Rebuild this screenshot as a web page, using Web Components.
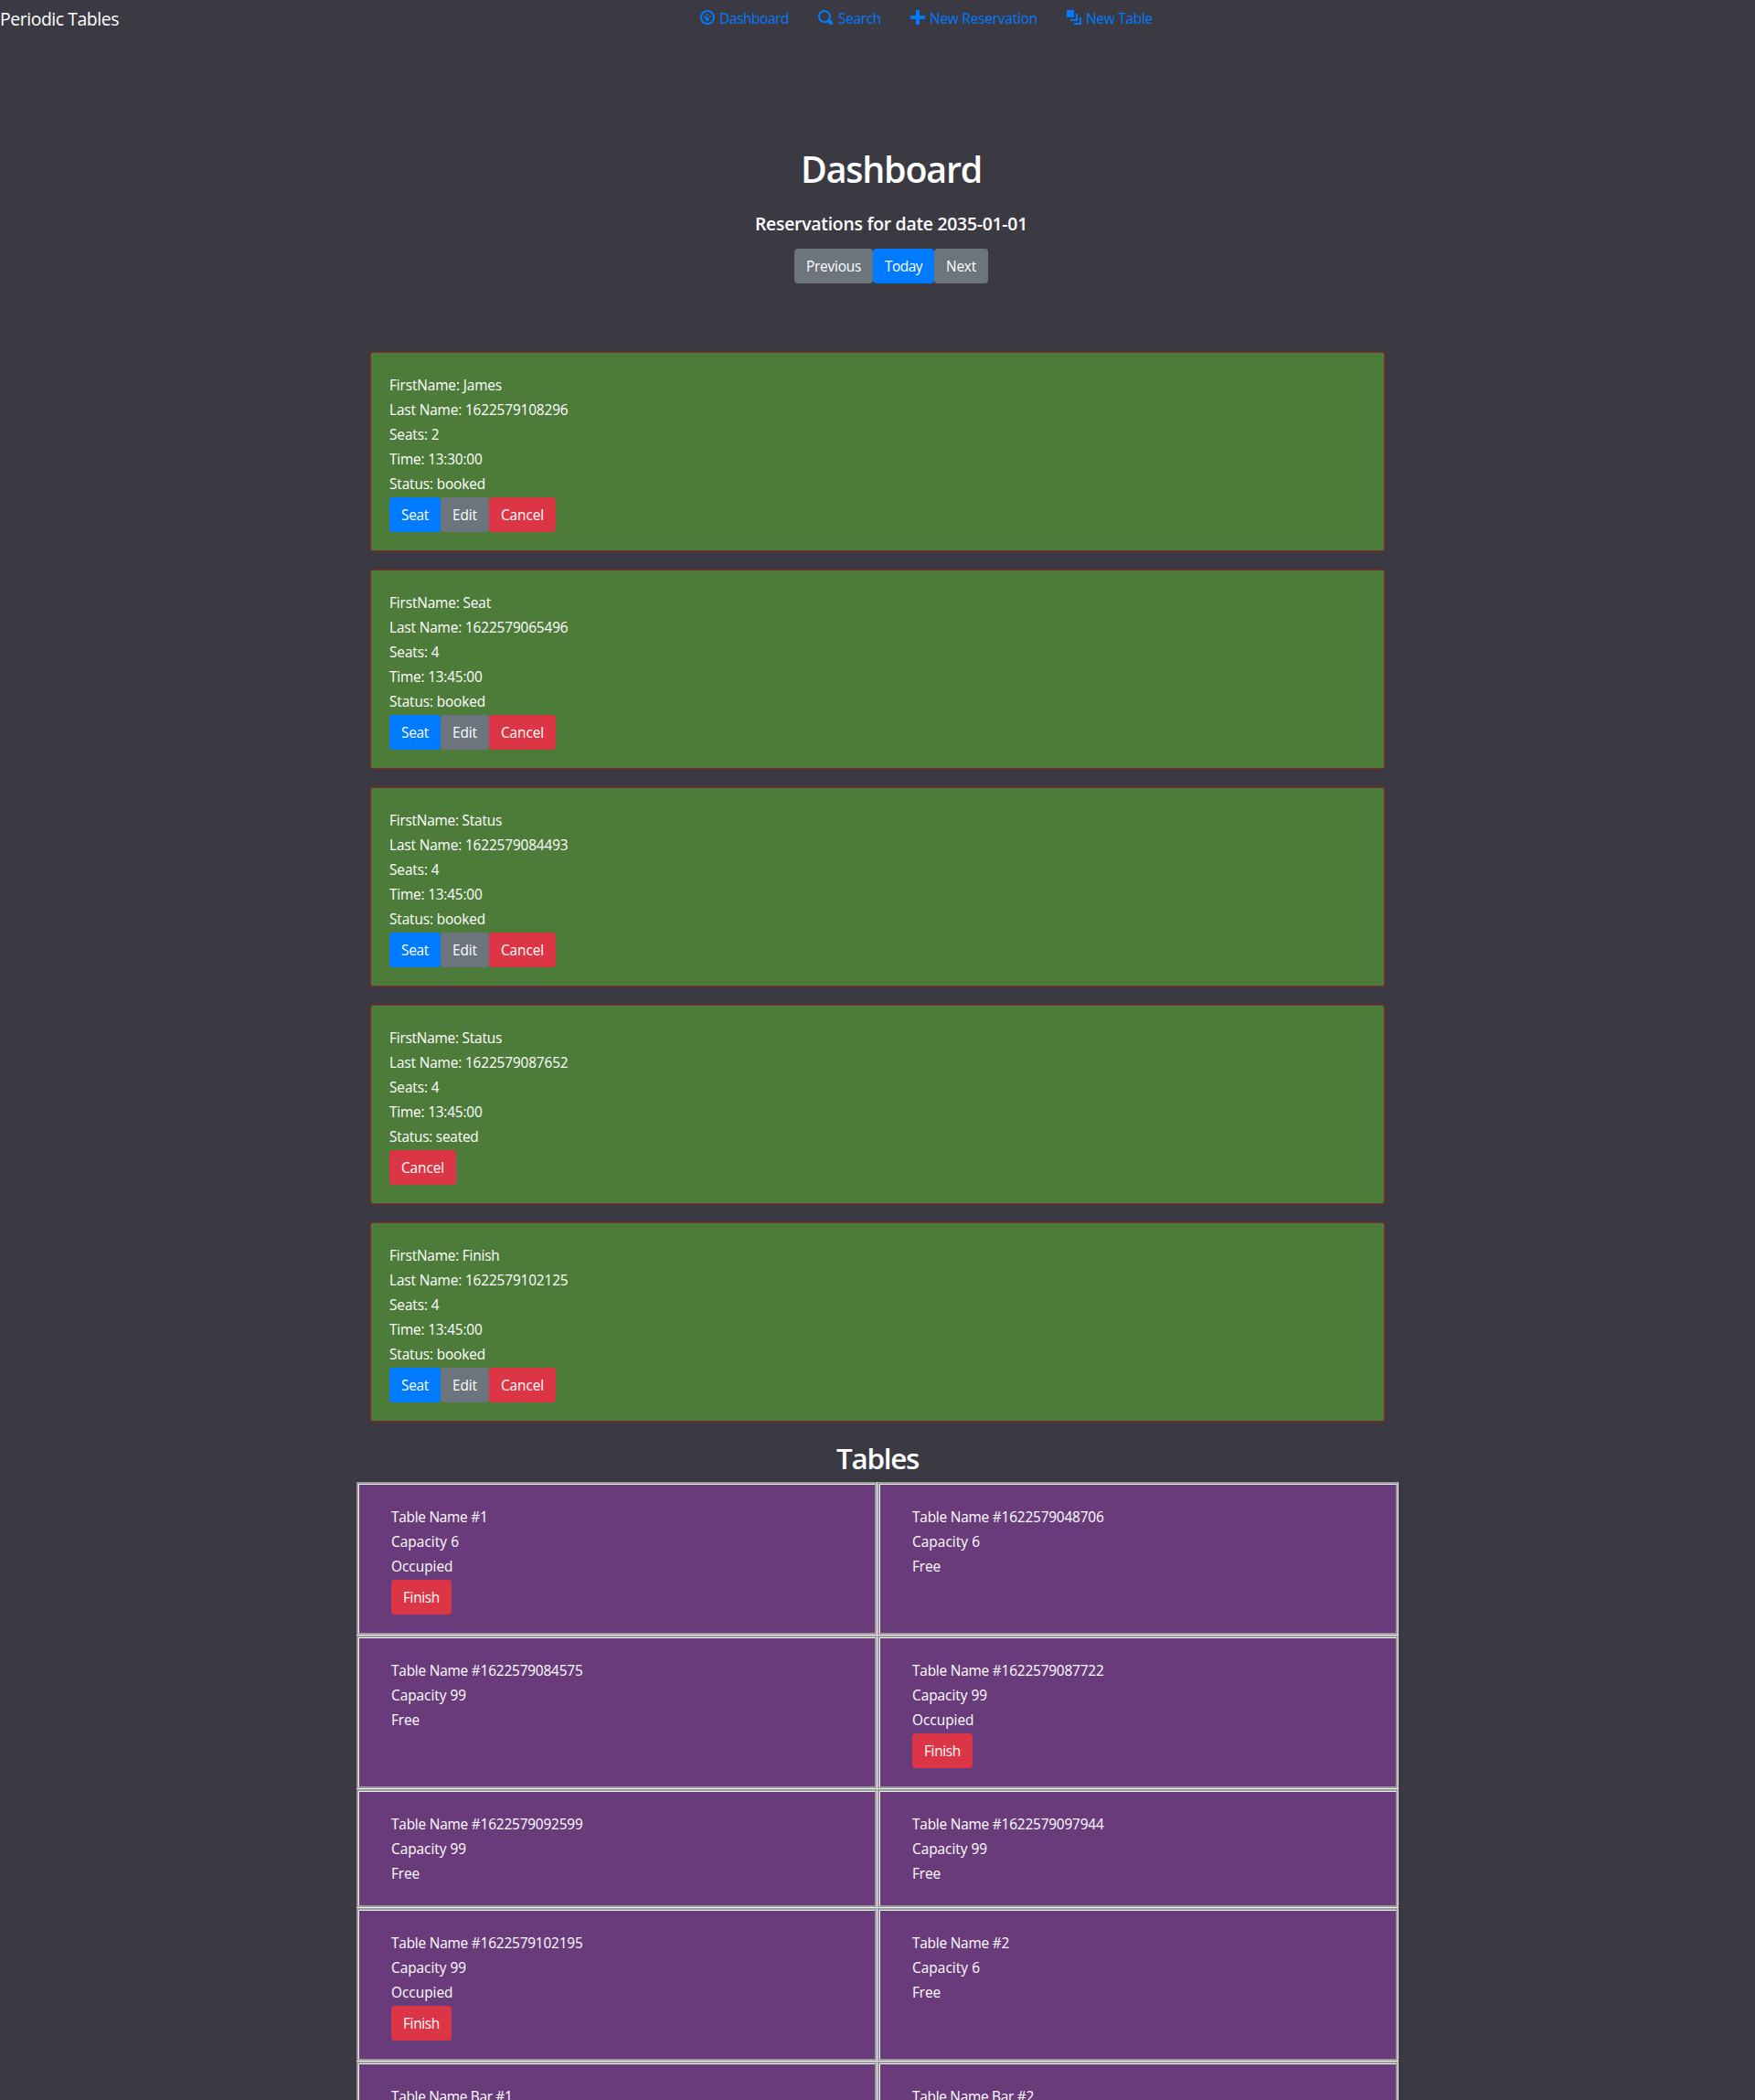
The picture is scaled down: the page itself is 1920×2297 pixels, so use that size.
<!DOCTYPE html>
<html lang="en">
<head>
<meta charset="utf-8">
<title>Periodic Tables</title>
<style>
html,body{margin:0;padding:0;height:2297px;overflow:hidden;background:#3b3a43}
body{font-family:"Open Sans","Noto Sans",sans-serif;font-size:15.4px;line-height:27px;color:#fff}
</style>
</head>
<body>
<periodic-app></periodic-app>
<script>
const define = (name, html, setup) => customElements.define(name, class extends HTMLElement {
  connectedCallback() {
    if (this.shadowRoot) return;
    const root = this.attachShadow({ mode: 'open' });
    const t = document.createElement('template');
    t.innerHTML = html;
    root.append(t.content.cloneNode(true));
    if (setup) setup(this, root);
  }
});

// A single line of text whose tracking is adjusted to the advance width in "w".
define('ui-text', `<style>:host{display:inline-block;white-space:nowrap}</style><span></span>`, (el, root) => {
  const s = root.querySelector('span'), text = el.getAttribute('text');
  s.textContent = text;
  const want = parseFloat(el.getAttribute('w'));
  const fit = (want - s.getBoundingClientRect().width) / text.length;
  s.style.letterSpacing = fit.toFixed(3) + 'px';
});

define('ui-button', `<style>
:host{display:flex;box-sizing:border-box;height:38px;line-height:24px;padding:8px 0 6px 13px;border-radius:4px;background:#6c757d;width:var(--bw)}
:host([kind=primary]){background:#007bff}
:host([kind=danger]){background:#dc3545}
</style><slot></slot>`, el => el.style.setProperty('--bw', el.getAttribute('width') + 'px'));

const button = (text, width, kind = '') =>
  `<ui-button kind="${kind}" width="${width}"><ui-text text="${text}" w="${width - 26}"></ui-text></ui-button>`;

const ICONS = {
  dashboard: 'M4 0c-2.2 0-4 1.8-4 4s1.8 4 4 4 4-1.8 4-4-1.8-4-4-4zm0 1c1.66 0 3 1.34 3 3s-1.34 3-3 3-3-1.34-3-3 1.34-3 3-3zm0 1c-.28 0-.5.22-.5.5s.22.5.5.5.5-.22.5-.5-.22-.5-.5-.5zm-1.66 1a.5.5 0 0 0-.19.84l.91.91c-.02.08-.06.16-.06.25 0 .55.45 1 1 1s1-.45 1-1-.45-1-1-1c-.09 0-.17.04-.25.06l-.91-.91a.5.5 0 0 0-.44-.16.5.5 0 0 0-.06 0zm3.16 0c-.28 0-.5.22-.5.5s.22.5.5.5.5-.22.5-.5-.22-.5-.5-.5z',
  search: 'M3.5 0c-1.93 0-3.5 1.57-3.5 3.5s1.57 3.5 3.5 3.5c.59 0 1.17-.14 1.66-.41a1 1 0 0 0 .13.13l1 1a1.02 1.02 0 1 0 1.44-1.44l-1-1a1 1 0 0 0-.16-.13c.27-.49.44-1.06.44-1.66 0-1.93-1.55-3.5-3.5-3.5zm0 1c1.39 0 2.5 1.1 2.5 2.5 0 .66-.24 1.27-.66 1.72-.01.01-.02.02-.03.03a1 1 0 0 0-.13.13c-.44.4-1.04.63-1.69.63-1.4 0-2.5-1.11-2.5-2.5s1.1-2.5 2.5-2.5z',
  plus: 'M3 0v3h-3v2h3v3h2v-3h3v-2h-3v-3h-2z',
  layers: 'M0 0v4h4v-4h-4zm5 2v3h-3v1h4v-4h-1zm2 2v3h-3v1h4v-4h-1z'
};
define('nav-link', `<style>
:host{display:flex;align-items:flex-start;color:#007bff;gap:5px}
:host([icon=search]){gap:6px}
svg{width:16px;height:16px;fill:currentColor;margin-top:11px}
ui-text{line-height:24px;margin-top:9px}
</style><svg viewBox="0 0 8 8"><path/></svg>`, (el, root) => {
  root.querySelector('path').setAttribute('d', ICONS[el.getAttribute('icon')]);
  root.innerHTML += `<ui-text text="${el.getAttribute('label')}" w="${el.getAttribute('w')}"></ui-text>`;
});

define('top-nav', `<style>
:host{display:flex;height:161px}
.brand{width:766px;font-size:19.4px;line-height:30px;padding-top:6px;box-sizing:border-box}
nav{display:flex}
nav-link{margin-right:32px}
</style><div class="brand"><ui-text text="Periodic Tables" w="130"></ui-text></div>
<nav><nav-link icon="dashboard" label="Dashboard" w="76"></nav-link>
<nav-link icon="search" label="Search" w="47"></nav-link>
<nav-link icon="plus" label="New Reservation" w="118"></nav-link>
<nav-link icon="layers" label="New Table" w="73"></nav-link></nav>`);

define('dash-head', `<style>
:host{display:flex;flex-direction:column;align-items:center;width:1950px;height:224px}
h1,h4{margin:0;font-weight:600;white-space:nowrap}
h1{font-size:39.4px;line-height:48px}
h4{font-size:19.4px;line-height:24px;margin:24px 0 15px}
.row{display:flex}
</style><h1><ui-text text="Dashboard" w="198"></ui-text></h1>
<h4><ui-text text="Reservations for date 2035-01-01" w="298"></ui-text></h4>
<div class="row">${button('Previous', 86)}${button('Today', 67, 'primary')}${button('Next', 59)}</div>`);

define('reservation-card', `<style>
:host{display:flex;flex-direction:column;box-sizing:border-box;width:1110px;height:218px;margin-bottom:20px;padding:22px 20px 20px;border:1px solid #8c2627;border-radius:3px;background:#4d7c3a}
ui-text{height:27px}
.row{display:flex;margin-top:1px}
.row ui-text{height:auto}
</style>`, (el, root) => {
  const [first, fw, last, seats, time, status, sw] = el.getAttribute('data').split('|');
  const line = (t, w) => `<ui-text text="${t}" w="${w}"></ui-text>`;
  root.innerHTML += line('FirstName: ' + first, fw) + line('Last Name: ' + last, 195.5) + line('Seats: ' + seats, 54.5) +
    line('Time: ' + time, 101.5) + line('Status: ' + status, sw) + '<div class="row">' +
    (status === 'booked' ? button('Seat', 56, 'primary') + button('Edit', 53) : '') + button('Cancel', 73, 'danger') + '</div>';
});

define('table-card', `<style>
:host{display:flex;flex-direction:column;align-items:flex-start;box-sizing:border-box;padding:22px 35px 20px;border:3px groove #efefef;background:#693b7b}
ui-text{height:27px}
ui-button{margin-top:1px}
ui-button ui-text{height:auto}
</style>`, (el, root) => {
  const [name, nw, cap, state] = el.getAttribute('data').split('|');
  const line = (t, w) => `<ui-text text="${t}" w="${w}"></ui-text>`;
  root.innerHTML += line('Table Name ' + name, nw) + line('Capacity ' + cap, cap.length > 1 ? 82 : 74) +
    line(state, state === 'Free' ? 31 : 67.5) + (state === 'Occupied' ? button('Finish', 66, 'danger') : '');
});

const reservations = ['James|123|1622579108296|2|13:30:00|booked|105', 'Seat|111|1622579065496|4|13:45:00|booked|105',
  'Status|123|1622579084493|4|13:45:00|booked|105', 'Status|123|1622579087652|4|13:45:00|seated|97.5',
  'Finish|120.5|1622579102125|4|13:45:00|booked|105'];
const tables = ['#1|105.5|6|Occupied', '#1622579048706|209.5|6|Free', '#1622579084575|209.5|99|Free', '#1622579087722|209.5|99|Occupied',
  '#1622579092599|209.5|99|Free', '#1622579097944|209.5|99|Free', '#1622579102195|209.5|99|Occupied', '#2|106|6|Free',
  'Bar #1|132.5|1|Free', 'Bar #2|133|1|Free'];

define('periodic-app', `<style>
:host{display:block;width:1920px;height:2297px;overflow:hidden}
main{display:flex;flex-direction:column;align-items:center}
h2{margin:0;font-size:31.4px;line-height:40px;height:46px;font-weight:600}
.grid{display:grid;grid-template-columns:570px 570px;grid-template-rows:168px 168px 130px 168px 168px}
</style><top-nav></top-nav><dash-head></dash-head><main>
${reservations.map(d => `<reservation-card data="${d}"></reservation-card>`).join('')}
<h2><ui-text text="Tables" w="90"></ui-text></h2>
<div class="grid">${tables.map(d => `<table-card data="${d}"></table-card>`).join('')}</div></main>`);
</script>
</body>
</html>
